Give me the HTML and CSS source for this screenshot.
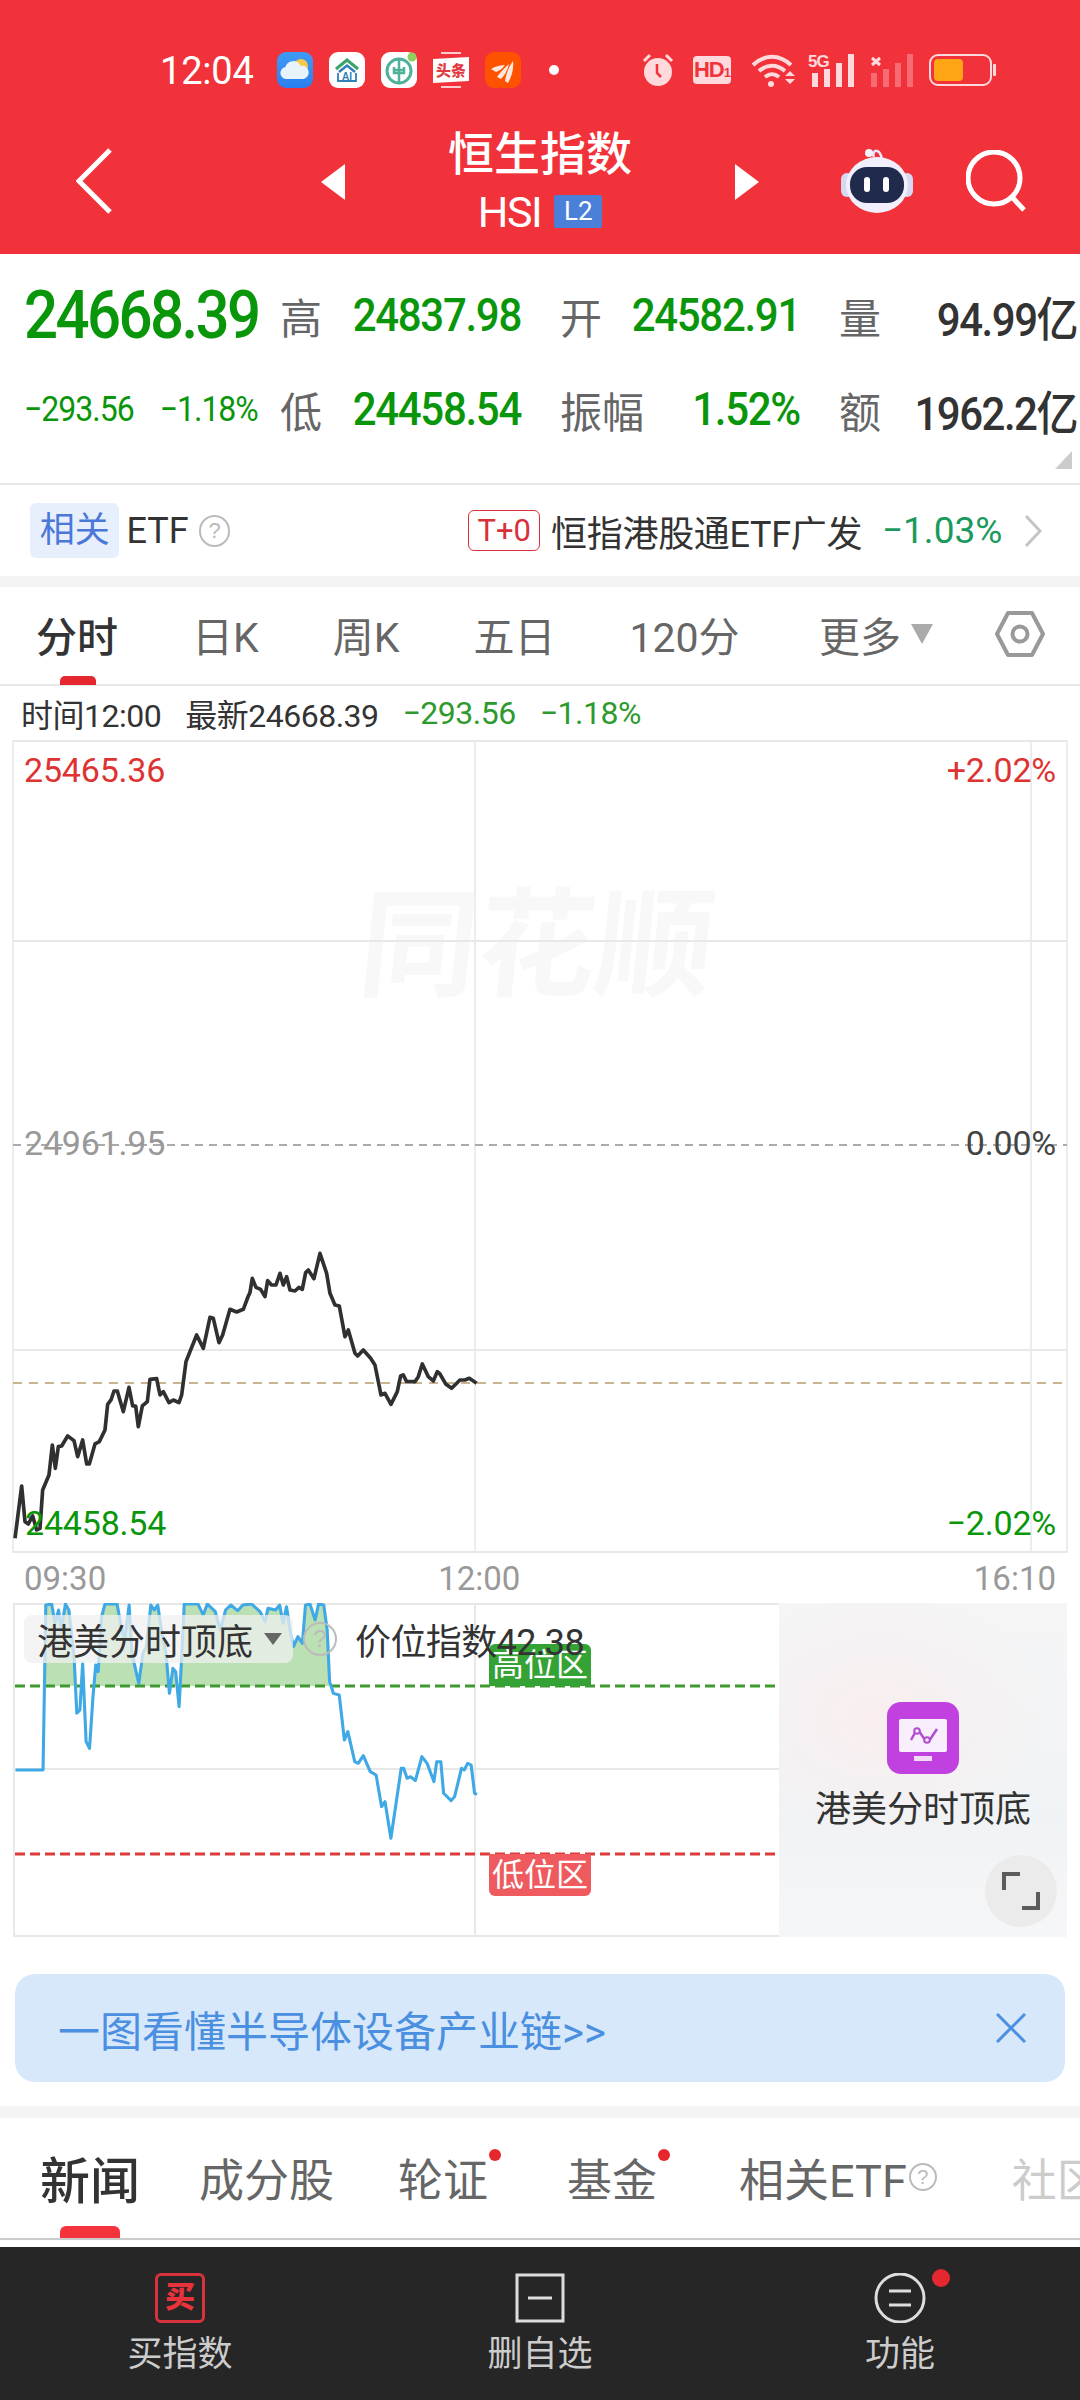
FILE: index.html
```html
<!DOCTYPE html>
<html lang="zh-CN">
<head>
  <meta charset="UTF-8" />
  <meta name="viewport" content="width=device-width, initial-scale=1" />
  <title>恒生指数 HSI</title>
  <link rel="stylesheet" href="styles.css">
</head>
<body>

<header class="top">
  <div class="status">
    <span class="clock">12:04</span>
    <div class="apps">
      <svg width="36" height="36" viewBox="0 0 36 36">
        <defs><linearGradient id="sky" x1="0" y1="0" x2="0" y2="1"><stop offset="0" stop-color="#3f9bf5"/><stop offset="1" stop-color="#2a7ff0"/></linearGradient></defs>
        <rect width="36" height="36" rx="9" fill="url(#sky)"/>
        <circle cx="24" cy="14" r="7" fill="#f7c84a"/>
        <path d="M9 27a6 6 0 0 1-.6-11.9A8 8 0 0 1 23.5 14a6.5 6.5 0 0 1 3 13z" fill="#e9f3fc"/>
      </svg>
      <svg width="36" height="36" viewBox="0 0 36 36">
        <rect width="36" height="36" rx="9" fill="#fff"/>
        <path d="M7 17 18 8l11 9" fill="none" stroke="#3aa56a" stroke-width="3"/>
        <path d="M10 20 18 13.500l8 6.500" fill="none" stroke="#2f7fb8" stroke-width="2.500"/>
        <path d="M9 21v8h18v-8" fill="none" stroke="#2f7fb8" stroke-width="1.800"/>
        <text x="18" y="27.500" class="app-ai">AI</text>
      </svg>
      <svg width="36" height="36" viewBox="0 0 36 36">
        <rect width="36" height="36" rx="9" fill="#fff"/>
        <circle cx="18" cy="19" r="12" fill="none" stroke="#4fb09c" stroke-width="3"/>
        <path d="M18 8v22M13 15v6h10v-6M13 18h10" fill="none" stroke="#4fb09c" stroke-width="2.500"/>
        <circle cx="31" cy="5" r="4.500" fill="#8fcf5f"/>
      </svg>
      <svg width="36" height="36" viewBox="0 0 36 36">
        <path d="M8 1h20M8 35h20" stroke="#fff" stroke-width="1.500"/>
        <path d="M0 7 36 5v24L0 31z" fill="#fff"/>
        <text x="18" y="24" class="app-news">头条</text>
      </svg>
      <svg width="36" height="36" viewBox="0 0 36 36">
        <rect width="36" height="36" rx="9" fill="#ff5200"/>
        <path d="M6 17c5-3 10-4 14-4-3 4-6 6-9 7zM12 25c3-4 7-9 12-13-1 5-4 11-8 15zM20 29c1-6 3-13 8-20 1 7-1 15-5 22z" fill="#ffe9dc"/>
      </svg>
    </div>
    <span class="status-dot"></span>
    <div class="sys">
      <svg width="32" height="34" viewBox="0 0 32 34">
        <path d="M2 8 8 2M30 8 24 2" stroke="#ffd9dc" stroke-width="3"/>
        <circle cx="16" cy="19" r="14" fill="#ffd9dc"/>
        <path d="M15 11v9l4 4" fill="none" stroke="#f2323a" stroke-width="2.500"/>
      </svg>
      <span class="hd">HD<small>1</small></span>
      <svg width="46" height="34" viewBox="0 0 46 34">
        <path d="M3 12C15 1 29 1 41 12M9 18c8-7 18-7 26 0M15 24c5-4 9-4 14 0" fill="none" stroke="#ffd9dc" stroke-width="4"/>
        <circle cx="21" cy="31" r="3" fill="#ffd9dc"/>
        <path d="M35 23h10l-5-5zM35 26h10l-5 5z" fill="#ffd9dc"/>
      </svg>
      <svg width="48" height="34" viewBox="0 0 48 34">
        <text x="0" y="14" class="sig-label">5G</text>
        <path d="M4 20h6v14H4zM16 16h6v18h-6zM28 10h6v24h-6zM40 1h6v33h-6z" fill="#ffd9dc"/>
      </svg>
      <svg width="44" height="34" viewBox="0 0 44 34">
        <path d="M2 5 10 12M10 5 2 12" stroke="#ffd9dc" stroke-width="3"/>
        <path d="M1 20h6v14H1zM13 16h6v18h-6zM25 10h6v24h-6zM37 1h6v33h-6z" fill="#ffd9dc" opacity=".35"/>
      </svg>
      <svg width="68" height="32" viewBox="0 0 68 32">
        <rect x="1" y="1" width="61" height="30" rx="8" fill="none" stroke="#ffd9dc" stroke-width="2"/>
        <rect x="5" y="5" width="29" height="22" rx="4" fill="#ffa414"/>
        <rect x="64" y="10" width="3" height="12" rx="1" fill="#ffd9dc"/>
      </svg>
    </div>
  </div>

  <div class="nav">
    <svg class="nav-back" width="37" height="66" viewBox="0 0 37 66"><path d="M34 2 3 33l31 31" fill="none" stroke="#fff" stroke-width="5"/></svg>
    <svg class="nav-prev" width="24" height="36" viewBox="0 0 24 36"><path d="M24 0v36L0 18z" fill="#fff"/></svg>
    <div class="title">
      <div class="title-name">恒生指数</div>
      <div class="title-code">HSI<span class="l2">L2</span></div>
    </div>
    <svg class="nav-next" width="24" height="36" viewBox="0 0 24 36"><path d="M0 0v36l24-18z" fill="#fff"/></svg>
    <svg class="nav-bot" width="74" height="66" viewBox="0 0 74 66">
      <path d="M34 9c-2-4 1-7 3-6 4 1 4 5 5 9" fill="none" stroke="#e6e6f8" stroke-width="2.500"/>
      <circle cx="29" cy="5" r="4" fill="#f4f1fb"/>
      <rect x="1" y="25" width="12" height="24" rx="6" fill="#d7d8f1"/>
      <rect x="61" y="25" width="12" height="24" rx="6" fill="#d7d8f1"/>
      <ellipse cx="37" cy="37" rx="31" ry="28" fill="#f0effb"/>
      <rect x="10" y="19" width="54" height="36" rx="17" fill="#1f2a4c"/>
      <rect x="24" y="29" width="6" height="15" rx="3" fill="#fff"/>
      <rect x="43" y="29" width="6" height="15" rx="3" fill="#fff"/>
    </svg>
    <svg class="nav-search" width="60" height="62" viewBox="0 0 60 62"><circle cx="28" cy="28" r="26" fill="none" stroke="#fff" stroke-width="5"/><path d="M46 47l12 13" stroke="#fff" stroke-width="5"/></svg>
  </div>
</header>

<section class="quote">
  <div class="q-cell q-main"><span class="q-tall">24668.39</span></div>
  <div class="q-cell"><span class="q-label">高</span><span class="q-num">24837.98</span></div>
  <div class="q-cell"><span class="q-label">开</span><span class="q-num">24582.91</span></div>
  <div class="q-cell"><span class="q-label">量</span><span class="q-num q-dark">94.99亿</span></div>
  <div class="q-cell q-change"><span class="q-tall">−293.56</span><span class="q-tall">−1.18%</span></div>
  <div class="q-cell"><span class="q-label">低</span><span class="q-num">24458.54</span></div>
  <div class="q-cell"><span class="q-label">振幅</span><span class="q-num">1.52%</span></div>
  <div class="q-cell"><span class="q-label">额</span><span class="q-num q-dark">1962.2亿</span></div>
  <span class="q-corner"></span>
</section>

<section class="etf">
  <span class="etf-chip">相关</span>
  <span class="etf-name">ETF</span>
  <span class="help etf-help">?</span>
  <span class="etf-tag">T+0</span>
  <span class="etf-fund">恒指港股通ETF广发</span>
  <span class="etf-pct">−1.03%</span>
  <svg width="18" height="32" viewBox="0 0 18 32"><path d="M2 1l14 15L2 31" fill="none" stroke="#c4c4c4" stroke-width="3"/></svg>
</section>

<nav class="periods">
  <span class="period period-on">分时</span>
  <span class="period">日K</span>
  <span class="period">周K</span>
  <span class="period">五日</span>
  <span class="period">120分</span>
  <span class="period period-more">更多<i class="more-arrow"></i></span>
  <svg class="period-gear" width="50" height="46" viewBox="0 0 50 46"><path d="M13 2h24l11 21-11 21H13L2 23z" fill="none" stroke="#999" stroke-width="4" stroke-linejoin="round"/><circle cx="25" cy="23" r="7.500" fill="none" stroke="#999" stroke-width="4"/></svg>
</nav>

<div class="crosshair">
  <span>时间12:00</span>
  <span>最新24668.39</span>
  <span class="cross-green">−293.56</span>
  <span class="cross-green">−1.18%</span>
</div>

<section class="chart">
  <div class="watermark">同花顺</div>
  <svg class="chart-svg" width="1080" height="813" viewBox="0 740 1080 813">
    <g fill="none" stroke="#e8e8e8" stroke-width="1.500">
      <path d="M13 741h1054M13 941h1054M13 1350h1054M13 1552h1054" stroke-width="2"/>
      <path d="M13 740v813M475 740v813M1031 740v813M1067 740v813"/>
    </g>
    <path d="M13 1145h1054" stroke="#aaa" stroke-width="2" stroke-dasharray="8 6"/>
    <path d="M13 1383h1054" stroke="#c9b48f" stroke-width="2" stroke-dasharray="9 7"/>
    <g transform="translate(0 1220) scale(.3333)">
      <polyline fill="none" stroke="#303030" stroke-width="11" stroke-linejoin="round" points="45,955 65,798 75,905 85,912 98,888 110,930 120,925 128,810 147,765 157,675 166,745 175,680 185,678 203,648 222,662 233,710 248,660 260,732 268,732 285,672 298,665 315,630 323,553 333,540 342,513 352,513 370,575 387,502 398,558 407,558 415,620 427,558 442,545 450,478 470,476 480,525 490,515 507,548 520,540 537,548 545,525 558,425 590,345 610,385 630,292 640,295 657,368 668,345 690,268 710,276 730,268 745,228 750,218 757,175 768,202 782,208 795,230 803,182 815,195 828,195 840,160 850,195 860,170 870,210 885,213 897,202 907,208 917,158 925,150 942,176 960,100 980,160 990,220 1005,255 1018,258 1035,350 1045,330 1065,400 1073,408 1090,390 1112,415 1125,435 1143,525 1155,520 1173,553 1192,515 1202,468 1210,465 1220,485 1245,485 1255,470 1267,432 1285,470 1300,483 1312,455 1320,462 1338,493 1355,505 1380,480 1395,480 1408,475 1430,490"/>
    </g>
  </svg>
  <span class="tick tick-tl">25465.36</span>
  <span class="tick tick-tr">+2.02%</span>
  <span class="tick tick-ml">24961.95</span>
  <span class="tick tick-mr">0.00%</span>
  <span class="tick tick-bl">24458.54</span>
  <span class="tick tick-br">−2.02%</span>
</section>

<div class="axis">
  <span>09:30</span>
  <span class="axis-mid">12:00</span>
  <span>16:10</span>
</div>

<section class="sub">
  <div class="sub-plot">
    <svg width="766" height="334" viewBox="13 1603 766 334">
      <defs>
        <clipPath id="topBand"><rect x="13" y="1603" width="766" height="83"/></clipPath>
        <clipPath id="plotBox"><rect x="13" y="1603" width="766" height="334"/></clipPath>
      </defs>
      <g fill="none" stroke="#e8e8e8" stroke-width="2">
        <path d="M13 1604h766M13 1769h766M13 1936h766"/>
        <path d="M14 1603v334M475 1603v334"/>
      </g>
      <g clip-path="url(#topBand)">
        <polygon transform="translate(0 1590) scale(.3444 .3333)" fill="#bbe0b3" points="125,1000 125,540 133,45 150,42 160,100 170,60 178,120 190,42 200,60 215,200 223,370 232,360 240,220 250,455 260,475 270,320 278,225 285,245 295,80 305,42 340,42 352,110 362,150 375,45 383,190 403,280 415,190 425,170 438,45 448,60 458,45 470,130 482,190 492,310 502,235 510,245 520,350 528,190 535,42 575,42 590,75 602,42 625,65 640,120 655,60 670,45 690,62 705,45 730,42 755,65 770,95 778,55 800,60 812,45 822,100 832,50 842,120 852,170 865,140 878,160 887,45 900,42 915,90 925,42 940,45 950,120 957,275 968,1000"/>
      </g>
      <path d="M15 1686h760" stroke="#3e9a2e" stroke-width="3" stroke-dasharray="10 5"/>
      <path d="M15 1854h760" stroke="#dd3a3a" stroke-width="3" stroke-dasharray="10 5"/>
      <g clip-path="url(#plotBox)">
        <polyline transform="translate(0 1590) scale(.3444 .3333)" fill="none" stroke="#3fa9e6" stroke-width="9" stroke-linejoin="round" points="45,540 125,540 133,45 150,42 160,100 170,60 178,120 190,42 200,60 215,200 223,370 232,360 240,220 250,455 260,475 270,320 278,225 285,245 295,80 305,42 340,42 352,110 362,150 375,45 383,190 403,280 415,190 425,170 438,45 448,60 458,45 470,130 482,190 492,310 502,235 510,245 520,350 528,190 535,42 575,42 590,75 602,42 625,65 640,120 655,60 670,45 690,62 705,45 730,42 755,65 770,95 778,55 800,60 812,45 822,100 832,50 842,120 852,170 865,140 878,160 887,45 900,42 915,90 925,42 940,45 950,120 957,275 968,310 985,315 1000,450 1010,425 1030,515 1040,520 1055,497 1075,545 1092,555 1108,650 1118,635 1135,745 1150,640 1165,535 1172,535 1182,565 1192,560 1206,572 1225,500 1240,520 1260,575 1268,515 1280,515 1288,610 1310,632 1320,620 1340,535 1348,540 1358,520 1368,525 1378,610 1385,613"/>
      </g>
    </svg>
    <span class="zone zone-high">高位区</span>
    <span class="zone zone-low">低位区</span>
    <div class="sub-head">
      <span class="sub-chip">港美分时顶底<i class="chip-arrow"></i></span>
      <span class="help sub-help">?</span>
      <span class="sub-value">价位指数42.38</span>
    </div>
  </div>
  <div class="sub-panel">
    <svg width="72" height="72" viewBox="0 0 72 72">
      <rect width="72" height="72" rx="14" fill="#c040e0"/>
      <rect x="12" y="17" width="48" height="33" rx="2" fill="#f8eefc"/>
      <rect x="27" y="54" width="18" height="5" fill="#f3dcfa"/>
      <path d="M24 38l5-9 3 0 6 9 4 1 8-12" fill="none" stroke="#b04fd0" stroke-width="2.500"/>
      <circle cx="30" cy="29" r="2.800" fill="#f8eefc" stroke="#b04fd0" stroke-width="2"/>
      <circle cx="40" cy="38" r="2.800" fill="#f8eefc" stroke="#b04fd0" stroke-width="2"/>
    </svg>
    <span class="panel-name">港美分时顶底</span>
    <span class="panel-expand">
      <svg width="38" height="38" viewBox="0 0 38 38"><path d="M2 18V2h16M36 20v16H20" fill="none" stroke="#5c5c5c" stroke-width="4"/></svg>
    </span>
  </div>
</section>

<div class="banner">
  <span>一图看懂半导体设备产业链&gt;&gt;</span>
  <svg width="30" height="30" viewBox="0 0 30 30"><path d="M1 1l28 28M29 1 1 29" stroke="#4a8fe0" stroke-width="3"/></svg>
</div>

<nav class="news-tabs">
  <span class="news-tab news-on">新闻</span>
  <span class="news-tab">成分股</span>
  <span class="news-tab news-dot">轮证</span>
  <span class="news-tab news-dot">基金</span>
  <span class="news-tab">相关ETF<span class="help news-help">?</span></span>
  <span class="news-tab news-fade">社区</span>
</nav>

<footer class="bottom">
  <div class="bottom-item">
    <span class="buy-box">买</span>
    <span class="bottom-label">买指数</span>
  </div>
  <div class="bottom-item">
    <svg width="50" height="50" viewBox="0 0 50 50"><rect x="2" y="2" width="46" height="46" fill="none" stroke="#ddd" stroke-width="3"/><path d="M13 25h24" stroke="#ddd" stroke-width="3"/></svg>
    <span class="bottom-label">删自选</span>
  </div>
  <div class="bottom-item bottom-func">
    <svg width="52" height="50" viewBox="0 0 52 50"><circle cx="26" cy="25" r="24" fill="none" stroke="#ddd" stroke-width="3"/><path d="M15 18h22M15 32h22" stroke="#ddd" stroke-width="3"/></svg>
    <span class="bottom-label">功能</span>
  </div>
</footer>

</body>
</html>
```

FILE: styles.css
```css
* {
  box-sizing: border-box;
}
body {
  margin: 0;
  width: 1080px;
  height: 2400px;
  overflow: hidden;
  background: #fff;
  color: #333;
  font-family: Roboto, "Noto Sans CJK SC", sans-serif;
}
svg {
  display: block;
  flex: none;
}

/* red header */
.top {
  height: 254px;
  background: #f2323a;
  color: #fff;
}
.status {
  height: 104px;
  padding: 52px 0 0 160px;
  display: flex;
  align-items: flex-start;
}
.clock {
  font-size: 38px;
  line-height: 38px;
  width: 117px;
  letter-spacing: -.2px;
}
.apps {
  display: flex;
  gap: 16px;
}
.status-dot {
  width: 10px;
  height: 10px;
  margin: 13px 0 0 28px;
  border-radius: 50%;
  background: #fff;
}
.sys {
  display: flex;
  align-items: center;
  margin-left: 83px;
  height: 36px;
}
.sys svg:nth-child(3) {
  margin-left: 19px;
}
.sys svg:nth-child(4) {
  margin-left: 12px;
}
.sys svg:nth-child(5) {
  margin-left: 14px;
}
.sys svg:nth-child(6) {
  margin-left: 15px;
}
.hd {
  margin-left: 19px;
  width: 38px;
  height: 28px;
  border-radius: 4px;
  background: #ffd9dc;
  color: #f2323a;
  font: 700 22px/28px "Liberation Sans", sans-serif;
  letter-spacing: -1px;
  text-align: center;
}
.hd small {
  font-size: 13px;
}
.app-ai {
  font: 700 10px "Liberation Sans", sans-serif;
  fill: #2f7fb8;
  text-anchor: middle;
}
.app-news {
  font: 900 15px "Noto Sans CJK SC", sans-serif;
  fill: #e23a42;
  text-anchor: middle;
}
.sig-label {
  font: 700 17px "Liberation Sans", sans-serif;
  fill: #ffd9dc;
  letter-spacing: -1px;
}

.nav {
  height: 150px;
  display: flex;
  align-items: center;
}
.nav-back {
  margin: 44px 0 0 76px;
  align-self: flex-start;
}
.nav-prev {
  margin: 5px 0 0 208px;
}
.title {
  width: 390px;
  text-align: center;
}
.title-name {
  font-size: 46px;
  line-height: 60px;
  font-weight: 500;
}
.title-code {
  margin-top: 5px;
  font-size: 43px;
  line-height: 46px;
  display: flex;
  justify-content: center;
  align-items: center;
  letter-spacing: -1.500px;
}
.l2 {
  margin-left: 13px;
  width: 48px;
  height: 33px;
  background: #4a80d8;
  border-radius: 2px;
  font-size: 26px;
  line-height: 33px;
  letter-spacing: 0;
}
.nav-next {
  margin-top: 5px;
}
.nav-bot {
  margin: 4px 0 0 81px;
}
.nav-search {
  margin: 4px 0 0 52px;
}

/* quote block */
.quote {
  position: relative;
  height: 231px;
  padding: 14px 3px 0 24px;
  display: grid;
  grid-template-columns: 217px 241px 240px 238px;
  grid-template-rows: 94px 94px;
  column-gap: 39px;
  border-bottom: 2px solid #e8e8e8;
}
.q-cell {
  display: flex;
  align-items: center;
  justify-content: space-between;
  white-space: nowrap;
}
.q-tall {
  display: inline-block;
  transform: scaleY(1.1);
}
.q-main {
  color: #0a960a;
  font-size: 60px;
  font-weight: 500;
  letter-spacing: -2.600px;
}
.q-change {
  justify-content: flex-start;
  gap: 26px;
  color: #0a960a;
  font-size: 32px;
  letter-spacing: -1px;
}
.q-label {
  color: #666;
  font-size: 42px;
}
.q-num {
  display: inline-block;
  transform: scaleY(1.1);
  color: #0a960a;
  font-size: 42px;
  font-weight: 500;
  letter-spacing: -1.300px;
}
.q-dark {
  color: #333;
  letter-spacing: -1.500px;
}
.q-corner {
  position: absolute;
  right: 8px;
  bottom: 14px;
  width: 0;
  height: 0;
  border-left: 17px solid transparent;
  border-bottom: 18px solid #ccc;
}

/* fund row */
.etf {
  height: 102px;
  padding: 0 38px 0 30px;
  display: flex;
  align-items: center;
  white-space: nowrap;
  border-bottom: 11px solid #f4f4f4;
}
.etf-chip {
  width: 90px;
  height: 55px;
  background: #e8effc;
  border-radius: 6px;
  color: #4a77d8;
  font-size: 35px;
  line-height: 55px;
  text-align: center;
}
.etf-name {
  margin-left: 7px;
  font-size: 36px;
}
.help {
  display: inline-block;
  border-radius: 50%;
  border: 2px solid #bbb;
  color: #bbb;
  text-align: center;
  font-family: "Liberation Sans", sans-serif;
}
.etf-help {
  margin-left: 10px;
  width: 32px;
  height: 32px;
  font-size: 22px;
  line-height: 28px;
}
.etf-tag {
  margin-left: 238px;
  width: 72px;
  height: 41px;
  border: 1px solid #d6323c;
  border-radius: 6px;
  color: #d6323c;
  font-size: 31px;
  line-height: 39px;
  text-align: center;
}
.etf-fund {
  margin-left: 11px;
  width: 333px;
  font-size: 36px;
  letter-spacing: -.3px;
}
.etf-pct {
  width: 143px;
  color: #1a9a5c;
  font-size: 37px;
}

/* period tabs */
.periods {
  height: 99px;
  padding: 0 35px 4px 36px;
  display: flex;
  align-items: center;
  gap: 74px;
  border-bottom: 2px solid #e8e8e8;
  white-space: nowrap;
}
.period {
  position: relative;
  color: #666;
  font-size: 41px;
}
.period-on {
  color: #333;
  font-weight: 500;
}
.period-on::after {
  content: "";
  position: absolute;
  left: 24px;
  bottom: -21px;
  width: 36px;
  height: 9px;
  border-radius: 5px 5px 0 0;
  background: #e5282f;
}
.period-more {
  margin-left: auto;
  display: flex;
  align-items: center;
}
.more-arrow {
  margin-left: 10px;
  width: 0;
  height: 0;
  border-left: 11px solid transparent;
  border-right: 11px solid transparent;
  border-top: 20px solid #aaa;
}
.period-gear {
  margin-left: -12px;
}

.crosshair {
  height: 54px;
  padding-left: 21px;
  display: flex;
  align-items: center;
  gap: 24px;
  font-size: 32px;
  letter-spacing: -.5px;
}
.cross-green {
  color: #2e9a2e;
}

/* intraday chart */
.chart {
  position: relative;
  height: 813px;
}
.chart-svg {
  position: relative;
}
.watermark {
  position: absolute;
  left: 360px;
  top: 142px;
  font-size: 118px;
  line-height: 130px;
  font-weight: 700;
  color: #f8f8f8;
  transform: skewX(-6deg);
}
.tick {
  position: absolute;
  font-size: 34px;
  line-height: 40px;
  letter-spacing: -.2px;
}
.tick-tl {
  left: 24px;
  top: 10px;
  color: #dd3333;
}
.tick-tr {
  right: 24px;
  top: 10px;
  color: #dd3333;
}
.tick-ml {
  left: 24px;
  top: 383px;
  color: #999;
}
.tick-mr {
  right: 24px;
  top: 383px;
  color: #444;
}
.tick-bl {
  left: 25px;
  top: 763px;
  color: #0a960a;
}
.tick-br {
  right: 24px;
  top: 763px;
  color: #0a960a;
}

.axis {
  height: 50px;
  padding: 0 24px;
  display: flex;
  align-items: center;
  color: #999;
  font-size: 33px;
}
.axis-mid {
  margin: 0 auto 0 332px;
}

/* indicator chart */
.sub {
  height: 334px;
  margin-left: 13px;
  display: flex;
}
.sub-plot {
  position: relative;
  width: 766px;
}
.sub-head {
  position: absolute;
  left: 11px;
  top: 10px;
  display: flex;
  align-items: center;
  white-space: nowrap;
  font-size: 36px;
}
.sub-chip {
  width: 269px;
  height: 48px;
  padding-left: 13px;
  display: flex;
  align-items: center;
  background: rgba(240, 240, 240, .75);
  border-radius: 8px;
}
.chip-arrow {
  margin-left: 11px;
  width: 0;
  height: 0;
  border-left: 9px solid transparent;
  border-right: 9px solid transparent;
  border-top: 12px solid #666;
}
.sub-help {
  margin-left: 10px;
  width: 34px;
  height: 34px;
  font-size: 24px;
  line-height: 30px;
}
.sub-value {
  margin-left: 18px;
  letter-spacing: -.6px;
}
.zone {
  position: absolute;
  left: 476px;
  width: 102px;
  height: 42px;
  color: #fff;
  font-size: 32px;
  line-height: 42px;
  text-align: center;
}
.zone-high {
  top: 41px;
  background: #34a234;
  border-radius: 6px 6px 0 0;
}
.zone-low {
  top: 251px;
  background: #ee5a5e;
  border-radius: 0 0 6px 6px;
}
.sub-panel {
  position: relative;
  width: 288px;
  padding-top: 99px;
  display: flex;
  flex-direction: column;
  align-items: center;
  background:
    radial-gradient(ellipse 170px 130px at 35% 35%, #f9eeef, transparent),
    linear-gradient(#f5f5f6, #f0f3f5 65%, #f5f6f7);
}
.panel-name {
  margin-top: 13px;
  font-size: 36px;
  line-height: 46px;
}
.panel-expand {
  position: absolute;
  right: 10px;
  bottom: 10px;
  width: 72px;
  height: 72px;
  border-radius: 50%;
  background: #ebebeb;
  display: flex;
  align-items: center;
  justify-content: center;
}

.banner {
  height: 108px;
  margin: 37px 15px 24px;
  padding: 0 39px 0 43px;
  display: flex;
  justify-content: space-between;
  align-items: center;
  background: #d8e8fb;
  border-radius: 20px;
  color: #4a8fe0;
  font-size: 42px;
}

/* news tabs */
.news-tabs {
  height: 134px;
  padding: 0 0 2px 40px;
  display: flex;
  align-items: center;
  gap: 64px;
  overflow: hidden;
  white-space: nowrap;
  color: #666;
  font-size: 45px;
  border-top: 12px solid #f4f4f4;
  border-bottom: 2px solid #ccc;
}
.news-tab {
  position: relative;
  display: flex;
  align-items: center;
}
.news-tab:nth-child(1) {
  margin-right: -5px;
}
.news-tab:nth-child(3) {
  margin-right: 15px;
}
.news-tab:nth-child(4) {
  margin-right: 18px;
}
.news-tab:nth-child(5) {
  margin-right: 11px;
}
.news-on {
  color: #333;
  font-size: 50px;
  font-weight: 500;
}
.news-on::after {
  content: "";
  position: absolute;
  left: 20px;
  bottom: -25px;
  width: 60px;
  height: 12px;
  border-radius: 6px 6px 0 0;
  background: #f4333c;
}
.news-dot::after {
  content: "";
  position: absolute;
  right: -13px;
  top: 4px;
  width: 12px;
  height: 12px;
  border-radius: 50%;
  background: #e5282f;
}
.news-help {
  width: 28px;
  height: 28px;
  margin-left: 2px;
  font-size: 20px;
  line-height: 24px;
}
.news-fade {
  color: #ccc;
}

/* bottom toolbar */
.bottom {
  height: 153px;
  margin-top: 7px;
  padding-top: 26px;
  display: grid;
  grid-template-columns: repeat(3, 360px);
  background: #262626;
}
.bottom-item {
  position: relative;
  display: flex;
  flex-direction: column;
  align-items: center;
}
.buy-box {
  width: 50px;
  height: 50px;
  border: 3px solid #d8323c;
  border-radius: 6px;
  color: #e8323c;
  font-size: 30px;
  font-weight: 900;
  line-height: 42px;
  text-align: center;
}
.bottom-label {
  margin-top: 9px;
  color: #ccc;
  font-size: 35px;
  line-height: 46px;
}
.bottom-func::after {
  content: "";
  position: absolute;
  left: 212px;
  top: -4px;
  width: 18px;
  height: 18px;
  border-radius: 50%;
  background: #e5282f;
}
```
